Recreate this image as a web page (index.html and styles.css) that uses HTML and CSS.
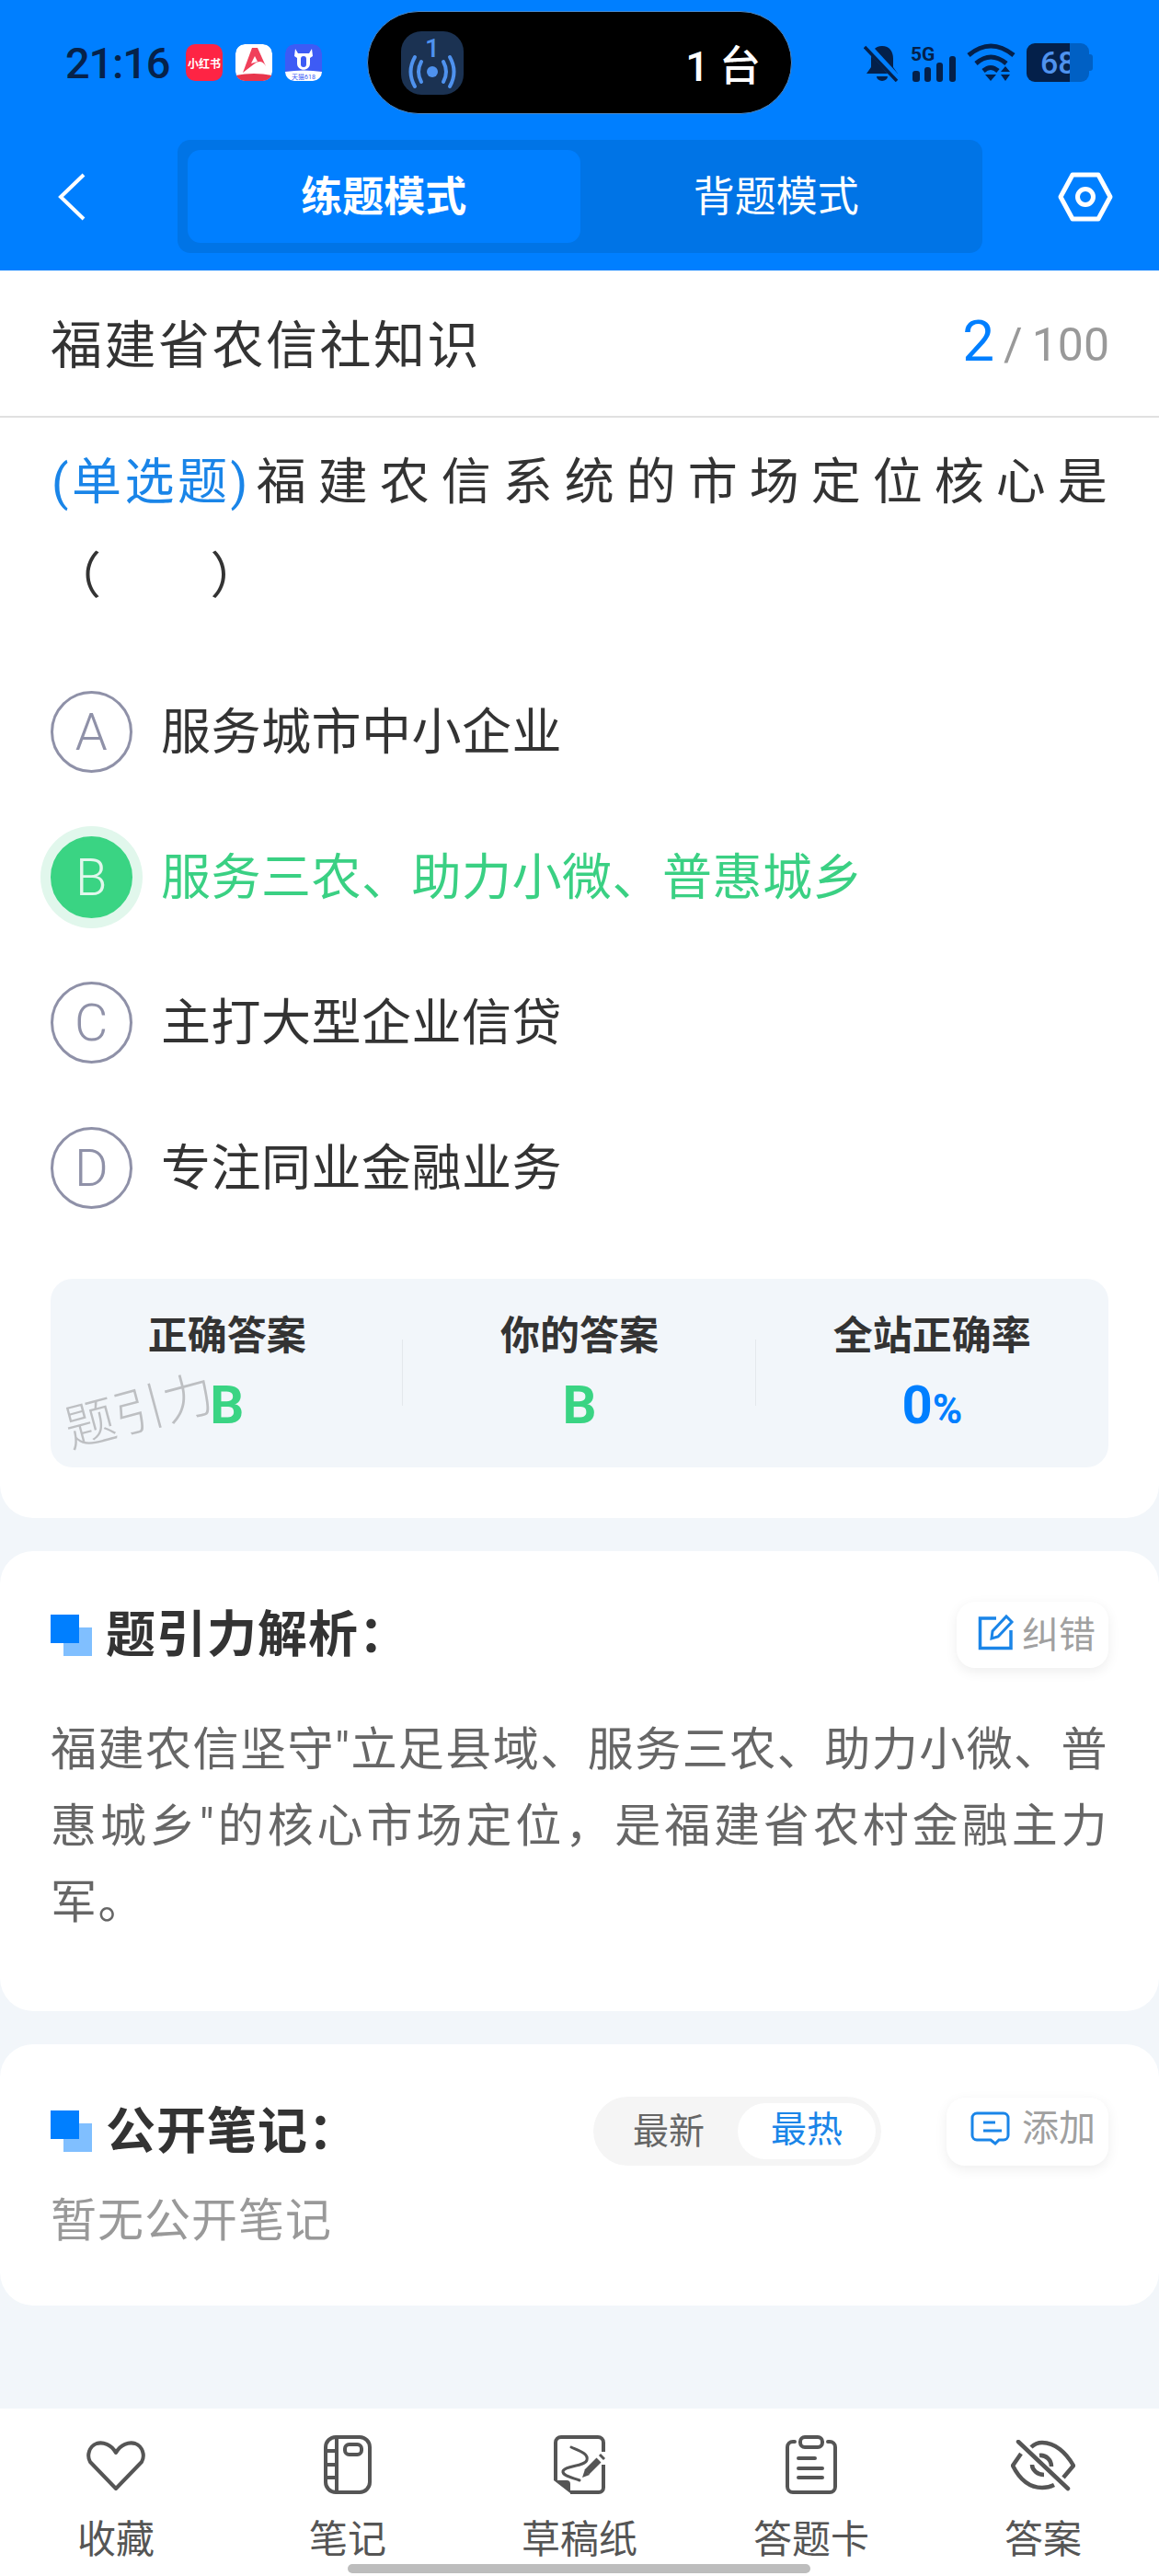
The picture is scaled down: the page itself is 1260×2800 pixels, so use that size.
FILE: index.html
```html
<!DOCTYPE html>
<html lang="zh-CN">
<head>
    <meta charset="UTF-8">
    <meta name="viewport" content="width=device-width, initial-scale=1.0">
    <title>福建省农信社知识</title>
    <link rel="stylesheet" href="styles.css">
</head>
<body>
    <header class="top">
        <!-- status bar -->
        <div class="status-bar">
            <span class="clock">21:16</span>
            <div class="app-icons">
                <span class="app-icon app-red">小红书</span>
                <svg class="app-icon" viewBox="0 0 40 40">
                    <rect width="40" height="40" rx="10" fill="#fff"/>
                    <path d="M0 34Q20 30 40 34V32a0 0 0 0 1 0 0V32a8 8 0 0 1-8 8H8a8 8 0 0 1-8-8Z" fill="#e8354c"/>
                    <path d="M18 4H24L33 24C30 18 25 18 21 21L8 31Z" fill="#f0405a"/>
                    <path d="M21 13L24 19L17 21Z" fill="#fff"/>
                </svg>
                <svg class="app-icon" viewBox="0 0 40 40">
                    <rect width="40" height="40" rx="10" fill="#3d5bf5"/>
                    <path d="M0 30Q20 27 40 30V32a8 8 0 0 1-8 8H8a8 8 0 0 1-8-8Z" fill="#fff"/>
                    <path d="M11 5L14 10H26L29 5L30 13L27 15V21C27 30 13 30 13 21V15L10 13Z" fill="#fff"/>
                    <rect x="17" y="13" width="6" height="12" rx="3" fill="#3d5bf5"/>
                    <text x="20" y="38" text-anchor="middle" class="tiny-text">天猫618</text>
                </svg>
            </div>
            <div class="island">
                <svg class="island-icon" viewBox="0 0 68 69">
                    <rect width="68" height="69" rx="22" fill="#1b3252"/>
                    <text x="34" y="28" text-anchor="middle" class="island-num">1</text>
                    <circle cx="34" cy="44" r="6" fill="#4f92ee"/>
                    <path d="M22 33Q16 44 22 55M46 33Q52 44 46 55M15 28Q6 44 15 60M53 28Q62 44 53 60" fill="none" stroke="#4f92ee" stroke-width="4" stroke-linecap="round"/>
                </svg>
                <span class="island-text">1 台</span>
            </div>
            <div class="status-icons">
                <svg class="ic-bell" viewBox="0 0 40 42">
                    <path d="M20 3C28 3 32 9 32 17V26L37 33H3L8 26V17C8 9 12 3 20 3Z" fill="#04204a"/>
                    <path d="M14 36a6 5 0 0 0 12 0Z" fill="#04204a"/>
                    <path d="M3 2L38 40" stroke="#007fff" stroke-width="8"/>
                    <path d="M1 4L36 41" stroke="#04204a" stroke-width="3.500"/>
                </svg>
                <svg class="ic-signal" viewBox="0 0 50 42">
                    <text x="0" y="19" class="signal-text">5G</text>
                    <rect x="2" y="30" width="8" height="12" rx="3" fill="#04204a"/>
                    <rect x="15" y="26" width="7" height="16" rx="3" fill="#04204a"/>
                    <rect x="28" y="21" width="7" height="21" rx="3" fill="#04204a"/>
                    <rect x="42" y="14" width="7" height="28" rx="3" fill="#04204a"/>
                </svg>
                <svg class="ic-wifi" viewBox="0 0 54 42">
                    <path d="M2 13Q26 -7 51 13M10 22Q26 8 43 22M18 30Q26 23 34 30" fill="none" stroke="#04204a" stroke-width="5"/>
                    <path d="M20 34H32L26 41Z" fill="#04204a"/>
                    <path d="M42 25L47 31H37ZM42 41L47 34H37Z" fill="#04204a"/>
                </svg>
                <div class="battery">
                    <span class="battery-fill">68</span>
                    <span class="battery-rest"></span>
                    <span class="battery-nub"></span>
                </div>
            </div>
        </div>

        <!-- mode switch -->
        <nav class="nav-bar">
            <svg class="ic-back" viewBox="0 0 32 54">
                <path d="M29 3L4 27L29 51" fill="none" stroke="#fff" stroke-width="4"/>
            </svg>
            <div class="mode-switch">
                <div class="mode-tab mode-active">练题模式</div>
                <div class="mode-tab">背题模式</div>
            </div>
            <svg class="ic-hex" viewBox="0 0 60 54">
                <path d="M16 3H44L57 27L44 51H16L3 27Z" fill="none" stroke="#fff" stroke-width="5" stroke-linejoin="round"/>
                <circle cx="30" cy="27" r="8.500" fill="none" stroke="#fff" stroke-width="5"/>
            </svg>
        </nav>
    </header>

    <main class="main">
        <section class="card card-question">
            <div class="title-row">
                <span class="subject">福建省农信社知识</span>
                <span class="progress"><b>2</b><i>/</i>100</span>
            </div>
            <p class="question"><span class="q-type">(单选题)</span>福建农信系统的市场定位核心是<br>（&nbsp;&nbsp;&nbsp;&nbsp;）</p>

            <div class="options">
                <div class="option"><span class="letter">A</span><span class="option-text">服务城市中小企业</span></div>
                <div class="option option-right"><span class="letter">B</span><span class="option-text">服务三农、助力小微、普惠城乡</span></div>
                <div class="option"><span class="letter">C</span><span class="option-text">主打大型企业信贷</span></div>
                <div class="option"><span class="letter">D</span><span class="option-text">专注同业金融业务</span></div>
            </div>

            <div class="stats">
                <div class="stat">
                    <div class="stat-label">正确答案</div>
                    <div class="stat-value green">B</div>
                </div>
                <div class="stat">
                    <div class="stat-label">你的答案</div>
                    <div class="stat-value green">B</div>
                </div>
                <div class="stat">
                    <div class="stat-label">全站正确率</div>
                    <div class="stat-value blue">0<small>%</small></div>
                </div>
                <span class="watermark">题引力</span>
            </div>
        </section>

        <section class="card card-analysis">
            <div class="card-head">
                <span class="head-mark"></span>
                <h2>题引力解析：</h2>
                <div class="chip chip-fix">
                    <svg class="ic-edit" viewBox="0 0 40 40">
                        <path d="M20 5H2.500V37.500H36V18" fill="none" stroke="#1a85e8" stroke-width="3.500"/>
                        <path d="M15 27L16 19L31 3L37 9L22 25Z" fill="none" stroke="#1a85e8" stroke-width="3"/>
                    </svg>
                    <span class="chip-text">纠错</span>
                </div>
            </div>
            <p class="analysis">福建农信坚守"立足县域、服务三农、助力小微、普惠城乡"的核心市场定位，是福建省农村金融主力军。</p>
        </section>

        <section class="card card-notes">
            <div class="card-head">
                <span class="head-mark"></span>
                <h2>公开笔记：</h2>
                <div class="sort">
                    <span class="sort-item">最新</span>
                    <span class="sort-item sort-active">最热</span>
                </div>
                <div class="chip chip-add">
                    <svg class="ic-comment" viewBox="0 0 43 38">
                        <path d="M7 2H36a5 5 0 0 1 5 5V26a5 5 0 0 1-5 5H31L27 35L22 31H7a5 5 0 0 1-5-5V7a5 5 0 0 1 5-5Z" fill="none" stroke="#1a85e8" stroke-width="3"/>
                        <path d="M14 12H27M14 21H34" stroke="#1a85e8" stroke-width="3"/>
                    </svg>
                    添加
                </div>
            </div>
            <p class="empty">暂无公开笔记</p>
        </section>
    </main>

    <footer class="tabbar">
        <div class="tab">
            <svg class="tab-icon" viewBox="0 0 64 64">
                <path d="M32 19C27 10 18 7 11 9C3 12 0 22 4 29L32 58L60 29C64 22 61 12 53 9C46 7 37 10 32 19Z" fill="none" stroke="#555" stroke-width="4" stroke-linejoin="round"/>
            </svg>
            <span>收藏</span>
        </div>
        <div class="tab">
            <svg class="tab-icon" viewBox="0 0 52 64">
                <rect x="2" y="2" width="48" height="60" rx="11" fill="none" stroke="#555" stroke-width="4"/>
                <path d="M14 2V62M2 17H14M2 32H14M2 46H14" fill="none" stroke="#555" stroke-width="4"/>
                <rect x="23" y="10" width="18" height="11" rx="4.500" fill="none" stroke="#555" stroke-width="4"/>
            </svg>
            <span>笔记</span>
        </div>
        <div class="tab">
            <svg class="tab-icon" viewBox="0 0 56 64">
                <path d="M2 49V8a6 6 0 0 1 6-6H48a6 6 0 0 1 6 6V18M54 32V57a5 5 0 0 1-5 5H18" fill="none" stroke="#555" stroke-width="4"/>
                <path d="M0 49H14a4 4 0 0 1 4 4V63Z" fill="#555"/>
                <path d="M19 13C28 17 38 20 36 27C34 34 12 33 10 39C9 44 20 46 28 49" fill="none" stroke="#555" stroke-width="3" stroke-linecap="round"/>
                <path d="M36 40L49 27" stroke="#555" stroke-width="7"/>
                <path d="M50 21L55 26" stroke="#555" stroke-width="3"/>
                <path d="M31 46L34 37L39 43Z" fill="#555"/>
            </svg>
            <span>草稿纸</span>
        </div>
        <div class="tab">
            <svg class="tab-icon" viewBox="0 0 56 64">
                <path d="M10 7H8a6 6 0 0 0-6 6V56a6 6 0 0 0 6 6H48a6 6 0 0 0 6-6V13a6 6 0 0 0-6-6H46" fill="none" stroke="#555" stroke-width="4" stroke-linecap="round"/>
                <rect x="16" y="2" width="24" height="11" rx="5" fill="none" stroke="#555" stroke-width="4"/>
                <path d="M14 25H32M14 36H40M14 46H40" stroke="#555" stroke-width="4" stroke-linecap="round"/>
            </svg>
            <span>答题卡</span>
        </div>
        <div class="tab">
            <svg class="tab-icon tab-eye" viewBox="0 0 70 56">
                <path d="M8 2L62 53" stroke="#555" stroke-width="4.500" stroke-linecap="round"/>
                <path d="M22 8C26 4 30 3 34 3C48 3 60 14 68 28L57 41M47 49C43 51 38 52 34 52C20 52 9 42 2 28L11 15" fill="none" stroke="#555" stroke-width="4.500" stroke-linejoin="round"/>
                <path d="M31 17C38 16 44 22 44 29M23 27C23 33 29 38 36 38" fill="none" stroke="#555" stroke-width="4.500"/>
            </svg>
            <span>答案</span>
        </div>
        <div class="home-bar"></div>
    </footer>
</body>
</html>
```

FILE: styles.css
```css
* {
    box-sizing: border-box;
}
body {
    margin: 0;
    height: 2800px;
    display: flex;
    flex-direction: column;
    font-family: Roboto, "Noto Sans CJK SC", sans-serif;
    background-color: #f2f6fa;
    color: #333;
    overflow: hidden;
}

/* header */
.top {
    height: 294px;
    background-color: #007fff;
}
.status-bar {
    display: flex;
    align-items: center;
    height: 112px;
    margin-top: 12px;
    padding-left: 71px;
}
.clock {
    width: 131px;
    font-size: 47px;
    font-weight: 500;
    color: #06224a;
    line-height: 1;
    letter-spacing: -1.200px;
}
.app-icons {
    display: flex;
    gap: 14px;
    width: 197px;
}
.app-icon {
    width: 40px;
    height: 40px;
    border-radius: 10px;
}
.app-red {
    display: flex;
    align-items: center;
    justify-content: center;
    background-color: #fe2444;
    color: #fff;
    font-size: 12px;
    font-weight: 700;
    white-space: nowrap;
}
.tiny-text {
    font-size: 7px;
    fill: #3d5bf5;
}
.island {
    display: flex;
    align-items: center;
    justify-content: space-between;
    width: 462px;
    height: 112px;
    padding: 0 33px 0 36px;
    background-color: #000;
    border: 1px solid #4a88c8;
    border-radius: 56px;
}
.island-icon {
    width: 68px;
    height: 69px;
}
.island-num {
    font-size: 28px;
    font-weight: 500;
    fill: #4f92ee;
}
.island-text {
    font-size: 45px;
    font-weight: 500;
    color: #fff;
}
.status-icons {
    display: flex;
    align-items: center;
    gap: 11px;
    margin-left: 78px;
}
.ic-bell {
    width: 40px;
    height: 42px;
}
.ic-signal {
    width: 50px;
    height: 42px;
}
.signal-text {
    font-size: 21px;
    font-weight: 700;
    fill: #04204a;
}
.ic-wifi {
    width: 54px;
    height: 42px;
}
.battery {
    position: relative;
    display: flex;
    width: 74px;
    height: 42px;
}
.battery-fill {
    width: 47px;
    height: 42px;
    padding-left: 15px;
    background-color: #04204a;
    border-radius: 9px 0 0 9px;
    color: #4f92ee;
    font-size: 34px;
    font-weight: 500;
    line-height: 42px;
    white-space: nowrap;
}
.battery-rest {
    width: 21px;
    height: 42px;
    background-color: #0060c4;
    border-radius: 0 9px 9px 0;
}
.battery-nub {
    width: 4px;
    height: 18px;
    margin-top: 12px;
    background-color: #0060c4;
    border-radius: 0 3px 3px 0;
}

.nav-bar {
    display: flex;
    align-items: center;
    margin-top: 28px;
    height: 123px;
    padding-left: 62px;
}
.ic-back {
    width: 32px;
    height: 54px;
}
.mode-switch {
    display: flex;
    width: 875px;
    height: 123px;
    margin-left: 99px;
    padding: 11px;
    background-color: #0074e6;
    border-radius: 14px;
}
.mode-tab {
    flex: 1;
    padding-top: 2px;
    text-align: center;
    font-size: 45px;
    line-height: 99px;
    color: #fff;
    border-radius: 14px;
}
.mode-active {
    font-weight: 700;
    background-color: #007fff;
}
.ic-hex {
    width: 60px;
    height: 54px;
    margin-left: 82px;
}

/* cards */
.main {
    flex: 1;
}
.card {
    background-color: #fff;
    border-radius: 36px;
}
.card-question {
    height: 1356px;
    padding-bottom: 55px;
    border-radius: 0 0 36px 36px;
}
.title-row {
    display: flex;
    align-items: center;
    justify-content: space-between;
    height: 160px;
    padding: 0 54px 5px 55px;
    border-bottom: 2px solid #e0e0e0;
}
.subject {
    font-size: 56px;
    letter-spacing: 2.500px;
}
.progress {
    font-size: 50px;
    color: #999;
}
.progress b {
    font-size: 62px;
    font-weight: 400;
    color: #007fff;
}
.progress i {
    margin: 0 10px;
    font-style: normal;
}
.question {
    margin: 20px 0 0;
    padding-left: 56px;
    font-size: 54px;
    line-height: 102px;
    letter-spacing: 13px;
    white-space: nowrap;
}
.q-type {
    margin-right: 6px;
    color: #1a85e8;
    letter-spacing: 3.500px;
}
.options {
    margin-top: 38px;
}
.option {
    display: flex;
    align-items: center;
    height: 158px;
    padding-left: 55px;
    font-size: 54px;
    letter-spacing: 0.500px;
}
.option-text {
    padding-bottom: 7px;
}
.letter {
    display: flex;
    align-items: center;
    justify-content: center;
    width: 89px;
    height: 89px;
    margin-right: 31px;
    padding-top: 2px;
    border: 3px solid #8f91a8;
    border-radius: 50%;
    color: #8f91a8;
    font-size: 56px;
    font-weight: 300;
}
.option-right {
    color: #3ad083;
}
.option-right .letter {
    border-color: #3ad483;
    background-color: #3ad483;
    color: #e1f7ec;
    box-shadow: 0 0 0 11px #e1f7ec;
}
.stats {
    position: relative;
    display: grid;
    grid-template-columns: repeat(3, 1fr);
    height: 205px;
    margin: 42px 55px 0;
    padding-top: 34px;
    background-color: #f2f6fa;
    border-radius: 24px;
}
.stat {
    position: relative;
    text-align: center;
}
.stat + .stat::before {
    content: "";
    position: absolute;
    left: -1px;
    top: 32px;
    width: 1px;
    height: 72px;
    background-color: #e4e8ec;
}
.stat-label {
    font-size: 43px;
    font-weight: 700;
    line-height: 56px;
}
.stat-value {
    margin-top: 17px;
    font-size: 58px;
    font-weight: 700;
    line-height: 60px;
}
.stat-value small {
    font-size: 44px;
}
.green {
    color: #3ad483;
}
.blue {
    color: #007fff;
}
.watermark {
    position: absolute;
    left: 14px;
    top: 114px;
    font-size: 55px;
    font-weight: 300;
    line-height: 60px;
    color: #bdbfc2;
    transform: rotate(-15deg);
}

.card-analysis {
    height: 500px;
    margin-top: 36px;
    padding: 55px 55px 0;
}
.card-notes {
    height: 284px;
    margin-top: 36px;
    padding: 57px 55px 0;
}
.card-head {
    display: flex;
    align-items: center;
    min-height: 72px;
}
.head-mark {
    position: relative;
    width: 45px;
    height: 45px;
    margin-right: 15px;
}
.head-mark::before,
.head-mark::after {
    content: "";
    position: absolute;
    width: 31px;
    height: 31px;
}
.head-mark::before {
    right: 0;
    bottom: 0;
    background-color: #80bfff;
}
.head-mark::after {
    left: 0;
    top: 0;
    background-color: #007fff;
}
.card-head h2 {
    flex: 1;
    margin: 0;
    padding-top: 2px;
    font-size: 54px;
    font-weight: 700;
    line-height: 60px;
    letter-spacing: 1px;
}
.chip {
    display: flex;
    align-items: center;
    padding-bottom: 6px;
    background-color: #fff;
    border-radius: 20px;
    box-shadow: 0 4px 14px rgba(0, 0, 0, 0.07);
    color: #a0a0a0;
    font-size: 40px;
    line-height: 50px;
}
.chip-text {
    padding-top: 8px;
}
.chip-fix {
    width: 165px;
    height: 72px;
    padding-left: 23px;
}
.chip-add {
    width: 176px;
    height: 74px;
    padding-left: 26px;
}
.ic-edit {
    width: 40px;
    height: 40px;
    margin-right: 8px;
}
.ic-comment {
    width: 43px;
    height: 38px;
    margin-right: 13px;
}
.sort {
    display: flex;
    align-items: center;
    width: 313px;
    height: 75px;
    margin-right: 71px;
    padding: 0 6px 0 43px;
    background-color: #f5f5f5;
    border-radius: 38px;
    font-size: 39px;
    line-height: 50px;
    white-space: nowrap;
}
.sort-item {
    flex-shrink: 0;
    color: #666;
}
.sort-active {
    width: 150px;
    height: 61px;
    margin-left: 36px;
    text-align: center;
    line-height: 59px;
    background-color: #fff;
    border-radius: 31px;
    color: #1a85e8;
}
.analysis {
    margin: 48px 0 0;
    font-size: 50px;
    line-height: 83px;
    letter-spacing: 1.400px;
    text-align: justify;
    color: #666;
}
.empty {
    margin: 25px 0 0;
    font-size: 50px;
    line-height: 70px;
    letter-spacing: 1px;
    color: #999;
}

/* bottom tabs */
.tabbar {
    position: relative;
    display: flex;
    height: 182px;
    padding-top: 29px;
    background-color: #fff;
}
.tab {
    flex: 1;
    display: flex;
    flex-direction: column;
    align-items: center;
    font-size: 42px;
    line-height: 50px;
    color: #555;
}
.tab-icon {
    height: 64px;
    margin-bottom: 25px;
}
.tab-eye {
    height: 56px;
    margin: 5px 0 28px;
}
.home-bar {
    position: absolute;
    left: 378px;
    bottom: 3px;
    width: 503px;
    height: 10px;
    background-color: #bdbdbd;
    border-radius: 5px;
}
```
